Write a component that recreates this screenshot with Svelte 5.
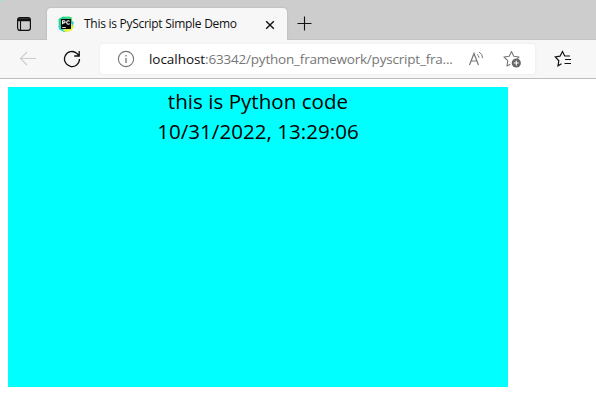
<script>
  const lines = ['this is Python code', '10/31/2022, 13:29:06'];
</script>

<div class="browser">
  <div class="corner"></div>
  <header class="strip">
    <svg class="tabs-icon" width="16" height="16" viewBox="0 0 16 16" fill="none" stroke="#111">
      <rect x="1.6" y="1.6" width="12.8" height="12.8" rx="2.3" stroke-width="1.2" />
      <path d="M2 3h12M1.5 4.5h13" stroke-width="1.3" />
      <path d="M4.5 5v9" stroke-width="1.1" />
    </svg>
    <div class="tab">
      <svg class="logo" width="16" height="16" viewBox="0 0 16 16">
        <path d="M.5 3 5 .5 11 1l2 13-7 2-5-3z" fill="#21d789" />
        <path d="M0 10l4-1 3 6.500-5-1.500z" fill="#25d5d0" />
        <path d="M10 .5l3.500 1L15 7l1 4-3 4-5 1-3-1.500 4-8z" fill="#e8f34a" />
        <path d="M9 .5l4.500 .5 1 6-4 3z" fill="#36dc78" />
        <path d="M13.500 5l2.500 1.500-2 4z" fill="#25c9e8" />
        <rect x="3" y="3" width="10" height="10" fill="#050505" />
        <path d="M4.600 8.300V4.700h1.400q1.200 0 1.200 1.100T6 6.900H4.800M11.600 5.300q-.6-.6-1.300-.6-1.600 0-1.600 1.800t1.600 1.800q.8 0 1.400-.6" fill="none" stroke="#fff" stroke-width="1.100" />
        <path d="M4.200 11.500h3.600" stroke="#ddd" />
      </svg>
      <span class="title">This is PyScript Simple Demo</span>
      <svg class="close" width="10" height="10" viewBox="0 0 10 10" stroke="#111" stroke-width="1.400">
        <path d="m1.200 1.200 7.600 7.600M8.800 1.200 1.200 8.800" />
      </svg>
    </div>
    <svg class="plus" width="15" height="15" viewBox="0 0 15 15" stroke="#111" stroke-width="1.1">
      <path d="M7.5.5v14M.5 7.5h14" />
    </svg>
  </header>
  <nav class="toolbar">
    <svg class="back" width="18" height="16" viewBox="0 0 18 16" fill="none" stroke="#cdcdcd" stroke-width="1.1">
      <path d="M8 1 1.500 7.500 8 14M1.500 7.500h15.500" />
    </svg>
    <svg class="reload" width="18" height="18" viewBox="0 0 18 18" fill="none" stroke="#111" stroke-width="1.3">
      <path d="M16.5 9A7.5 7.5 0 1 1 13.7 3.2L16 5.5M16.2 1v5h-5" />
    </svg>
    <div class="address">
      <svg class="info" width="18" height="18" viewBox="0 0 18 18" fill="none" stroke="#737373">
        <circle cx="9" cy="9" r="7.6" stroke-width="1.1" />
        <path d="M9 8v5M9 5v1.4" stroke-width="1.3" />
      </svg>
      <span class="url"><b>localhost</b>:63342/python_framework/pyscript_fra...</span>
      <svg class="read" width="17" height="16" viewBox="0 0 17 16" fill="none" stroke="#777">
        <path d="m1.500 14 4.500-11.500L10.500 14M3 10h6" stroke-width="1.200" />
        <path d="M9 3.300q2 1.200 2 3.400M11 1q3.600 1.800 3.600 6.200" />
      </svg>
      <svg class="star-add" width="18" height="18" viewBox="0 0 18 18" fill="none">
        <path d="M7.300 14.200 4 16l.8-5.300L1 7l5.200-.8L8.500 1.500l2.300 4.700L16 7l-1.800 1.700" stroke="#777" stroke-width="1.100" stroke-linejoin="round" />
        <circle cx="13.300" cy="13" r="4.600" fill="#666" />
        <path d="M13.300 10.500v5M10.800 13h5" stroke="#fff" stroke-width="1.100" />
      </svg>
    </div>
    <svg class="favs" width="17" height="17" viewBox="0 0 17 17" fill="none" stroke="#111" stroke-width="1.200">
      <path d="M7.500 13.800 4 15.800 4.800 10.800 1.300 7l4.700-.8L8.500 1.500l2.200 4.500h5.300M11 9.500h6M10.500 13.500h6.500" />
    </svg>
  </nav>
  <main>
    <div class="panel">
      {#each lines as line}
        <div class="line">{line}</div>
      {/each}
    </div>
  </main>
</div>

<style>
  .browser {
    position: relative;
    width: 596px;
    height: 410px;
    overflow: hidden;
    background: #fff;
    font-family: 'Open Sans', 'Noto Sans', sans-serif;
  }
  svg { display: block; flex: none; }
  .corner {
    position: absolute;
    width: 5px;
    height: 5px;
    background: radial-gradient(circle at 100% 100%, transparent 5px, #a7dfc4 5.5px);
  }
  .strip {
    display: flex;
    box-sizing: border-box;
    height: 40px;
    padding-left: 16px;
    background: #cdcdcd;
    border-bottom: 1px solid #c3c3c3;
  }
  .tabs-icon { margin-top: 16px; }
  .tab {
    display: flex;
    align-items: center;
    box-sizing: border-box;
    width: 240px;
    height: 32px;
    margin: 8px 0 0 15px;
    padding-left: 11px;
    background: #f7f7f7;
    border-radius: 4px 4px 0 0;
    box-shadow: 0 0 2px #aaa;
    clip-path: inset(-3px -3px 0 -3px);
  }
  .title {
    width: 171px;
    margin-left: 10px;
    font-size: 12px;
    line-height: 32px;
    white-space: nowrap;
    letter-spacing: -0.28px;
    color: #111;
  }
  .close { margin-left: 10px; margin-top: 1px; }
  .plus { margin: 16px 0 0 10px; }
  .toolbar {
    display: flex;
    align-items: center;
    box-sizing: border-box;
    height: 39px;
    padding: 0 0 1px 19px;
    background: #f7f7f7;
    border-bottom: 1px solid #bdbdbd;
  }
  .reload { margin-left: 26px; }
  .address {
    display: flex;
    align-items: center;
    box-sizing: border-box;
    width: 435px;
    height: 30px;
    margin-left: 19px;
    padding-left: 17px;
    background: #fff;
    border-radius: 4px;
    box-shadow: 0 0 3px #e7e7e7;
  }
  .url {
    width: 306px;
    margin-left: 14px;
    font-size: 13.5px;
    line-height: 30px;
    white-space: nowrap;
    letter-spacing: -0.2px;
    color: #777;
  }
  .url b { font-weight: 400; letter-spacing: -0.05px; color: #111; }
  .read { margin-left: 13px; }
  .star-add { margin-left: 18px; }
  .favs { margin-left: 19px; }
  main { padding: 8px; }
  .panel {
    width: 500px;
    height: 300px;
    background: #0ff;
    color: #000;
    text-align: center;
  }
  .line { height: 30px; font-size: 20.5px; letter-spacing: 0.05px; line-height: 28px; }
</style>
